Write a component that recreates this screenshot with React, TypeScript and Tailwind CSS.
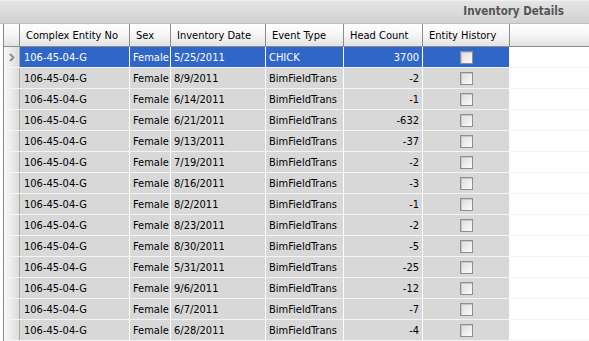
import React from "react";

const rows: [string, string, string, string, string][] = [
  ["106-45-04-G", "Female", "5/25/2011", "CHICK", "3700"],
  ["106-45-04-G", "Female", "8/9/2011", "BimFieldTrans", "-2"],
  ["106-45-04-G", "Female", "6/14/2011", "BimFieldTrans", "-1"],
  ["106-45-04-G", "Female", "6/21/2011", "BimFieldTrans", "-632"],
  ["106-45-04-G", "Female", "9/13/2011", "BimFieldTrans", "-37"],
  ["106-45-04-G", "Female", "7/19/2011", "BimFieldTrans", "-2"],
  ["106-45-04-G", "Female", "8/16/2011", "BimFieldTrans", "-3"],
  ["106-45-04-G", "Female", "8/2/2011", "BimFieldTrans", "-1"],
  ["106-45-04-G", "Female", "8/23/2011", "BimFieldTrans", "-2"],
  ["106-45-04-G", "Female", "8/30/2011", "BimFieldTrans", "-5"],
  ["106-45-04-G", "Female", "5/31/2011", "BimFieldTrans", "-25"],
  ["106-45-04-G", "Female", "9/6/2011", "BimFieldTrans", "-12"],
  ["106-45-04-G", "Female", "6/7/2011", "BimFieldTrans", "-7"],
  ["106-45-04-G", "Female", "6/28/2011", "BimFieldTrans", "-4"],
];

function CheckBox() {
  return (
    <div className="w-[13px] h-[13px] border border-[#8f8f8f] bg-gradient-to-br from-[#dcdcdc] to-[#fbfbfb] shadow-[inset_1px_1px_0_#c8c8c8]" />
  );
}

export default function App() {
  const hdr =
    "h-full flex items-center px-[6px] border-r border-[#8c8c8c] bg-gradient-to-b from-white via-[#f6f6f6] to-[#e2e2e2] text-black";
  return (
    <div
      className="w-[589px] h-[341px] overflow-hidden bg-white text-[11px] leading-none"
      style={{ fontFamily: "Tahoma, 'DejaVu Sans Condensed', 'Liberation Sans', sans-serif" }}
    >
      <div className="h-[24px] border-t border-[#f0f0f0] border-b border-b-[#bdbdbd] bg-gradient-to-b from-[#e4e4e4] to-[#d2d2d2] flex items-center justify-end pr-[25px]">
        <span className="font-bold text-[11.5px] text-[#555555]">Inventory Details</span>
      </div>
      <div className="flex flex-col border-l border-[#8c8c8c] ml-[3px]">
        <div className="flex h-[23px] border-b border-[#8c8c8c] bg-gradient-to-b from-white via-[#f6f6f6] to-[#e2e2e2]">
          <div className={hdr + " w-[16px]"} />
          <div className={hdr + " w-[110px]"}>Complex Entity No</div>
          <div className={hdr + " w-[41px]"}>Sex</div>
          <div className={hdr + " w-[95px]"}>Inventory Date</div>
          <div className={hdr + " w-[78px]"}>Event Type</div>
          <div className={hdr + " w-[79px]"}>Head Count</div>
          <div className={hdr + " w-[87px]"}>Entity History</div>
          <div className="flex-1" />
        </div>
        {rows.map((r, i) => {
          const sel = i === 0;
          const cell =
            "h-full flex items-center border-r border-white " +
            (sel ? "bg-[#3066c8] text-white" : "bg-[#d8d8d8] text-black");
          return (
            <div key={i} className="flex h-[21px] border-b border-[#f4f4f4]">
              <div className="w-[16px] h-full border-r border-[#a8a8a8] bg-gradient-to-r from-[#fafafa] to-[#dcdcdc] flex items-center justify-center">
                {sel ? (
                  <svg width="6" height="9" viewBox="0 0 6 9">
                    <path d="M1 1 L4.5 4.5 L1 8" fill="none" stroke="#8a8a8a" strokeWidth="1.8" />
                  </svg>
                ) : null}
              </div>
              <div className={cell + " w-[110px] pl-[4px]"}>{r[0]}</div>
              <div className={cell + " w-[41px] pl-[3px]"}>{r[1]}</div>
              <div className={cell + " w-[95px] pl-[3px]"}>{r[2]}</div>
              <div className={cell + " w-[78px] pl-[3px]"}>{r[3]}</div>
              <div className={cell + " w-[79px] justify-end pr-[3px]"}>{r[4]}</div>
              <div className={cell + " w-[87px] justify-center"}>
                <CheckBox />
              </div>
              <div className="flex-1 bg-white" />
            </div>
          );
        })}
      </div>
    </div>
  );
}
